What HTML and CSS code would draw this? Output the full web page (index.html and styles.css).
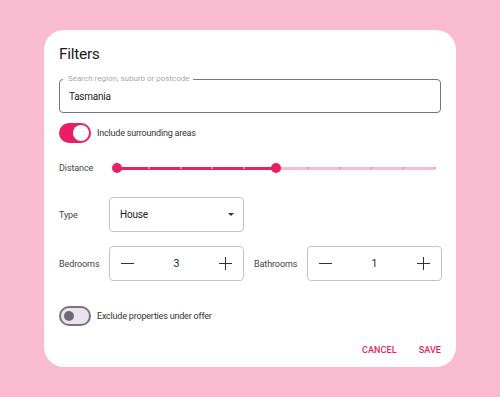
FILE: index.html
```html
<!DOCTYPE html>
<html>
<head>
<meta charset="utf-8">
<link rel="stylesheet" href="styles.css">
</head>
<body>
<div class="card">
  <div class="title">Filters</div>
  <div class="field">
    <span class="field-label">Search region, suburb or postcode</span>
    <span class="field-value">Tasmania</span>
  </div>
  <div class="switch-row row-include">
    <span class="switch on"><span class="knob"></span></span>
    <span class="switch-text">Include surrounding areas</span>
  </div>
  <div class="row row-distance">
    <span class="label">Distance</span>
    <div class="slider">
      <div class="track-inactive"></div>
      <div class="track-active"></div>
      <span class="tick t-on" style="left:10%"></span>
      <span class="tick t-on" style="left:20%"></span>
      <span class="tick t-on" style="left:30%"></span>
      <span class="tick t-on" style="left:40%"></span>
      <span class="tick" style="left:60%"></span>
      <span class="tick" style="left:70%"></span>
      <span class="tick" style="left:80%"></span>
      <span class="tick" style="left:90%"></span>
      <span class="tick" style="left:100%"></span>
      <span class="thumb" style="left:0%"></span>
      <span class="thumb" style="left:50%"></span>
    </div>
  </div>
  <div class="row row-type">
    <span class="label">Type</span>
    <div class="box select">
      <span>House</span>
      <span class="caret"></span>
    </div>
  </div>
  <div class="row row-rooms">
    <span class="label">Bedrooms</span>
    <div class="box stepper">
      <span class="minus"></span>
      <span class="num">3</span>
      <span class="plus"></span>
    </div>
    <span class="label label-bath">Bathrooms</span>
    <div class="box stepper">
      <span class="minus"></span>
      <span class="num">1</span>
      <span class="plus"></span>
    </div>
  </div>
  <div class="switch-row row-exclude">
    <span class="switch off"><span class="knob"></span></span>
    <span class="switch-text">Exclude properties under offer</span>
  </div>
  <div class="actions">
    <span class="btn">CANCEL</span>
    <span class="btn">SAVE</span>
  </div>
</div>
</body>
</html>
```

FILE: styles.css
```css
* { box-sizing: border-box; }
html, body { margin: 0; padding: 0; }
body {
  background: #f8bbd0;
  font-family: Roboto, "Liberation Sans", sans-serif;
  color: #1d1b20;
  width: 500px;
  height: 397px;
  padding: 30px 44px 0 44px;
}
.card {
  width: 412px;
  height: 337px;
  background: #fff;
  border-radius: 20px;
  padding: 12px 15px 0 15px;
  display: flex;
  flex-direction: column;
}
.title {
  font-size: 15.5px;
  letter-spacing: -0.3px;
  line-height: 24px;
  height: 24px;
  color: #1d1b20;
}
.field {
  position: relative;
  margin-top: 13px;
  height: 34px;
  border: 1px solid #79747e;
  border-radius: 4px;
  display: flex;
  align-items: center;
  padding-left: 9px;
}
.field-label {
  position: absolute;
  top: -7px;
  left: 3px;
  padding: 0 3px 0 5px;
  background: #fff;
  font-size: 8px;
  line-height: 12px;
  color: #a8a8a8;
}
.field-value {
  font-size: 10px;
  letter-spacing: -0.25px;
  color: #1d1b20;
}
.switch-row {
  display: flex;
  align-items: center;
  height: 20px;
}
.row-include { margin-top: 10px; }
.row-exclude { margin-top: 25px; }
.switch {
  width: 32px;
  height: 20px;
  border-radius: 10px;
  display: flex;
  align-items: center;
  flex: none;
}
.switch.on {
  background: #e91e63;
  justify-content: flex-end;
  padding-right: 2px;
}
.switch.on .knob {
  width: 16px;
  height: 16px;
  border-radius: 50%;
  background: #fff;
}
.switch.off {
  background: #ebe2ef;
  border: 2px solid #79747e;
  padding-left: 3px;
}
.switch.off .knob {
  width: 10px;
  height: 10px;
  border-radius: 50%;
  background: #6f6a72;
}
.switch-text {
  margin-left: 6px;
  font-size: 9px;
  letter-spacing: -0.2px;
  color: #333;
}
.row {
  display: flex;
  align-items: center;
}
.label {
  width: 50px;
  flex: none;
  font-size: 9px;
  letter-spacing: -0.1px;
  color: #444;
}
.row-distance {
  margin-top: 15px;
  height: 20px;
}
.slider {
  position: relative;
  flex: 1;
  height: 20px;
  margin: 0 6px 0 8px;
}
.track-inactive, .track-active {
  position: absolute;
  top: 50%;
  height: 3px;
  margin-top: -1.5px;
  border-radius: 2px;
}
.track-inactive {
  left: 0;
  right: 0;
  background: #f8bbd0;
}
.track-active {
  left: 0;
  width: 50%;
  background: #e91e63;
}
.tick {
  position: absolute;
  top: 50%;
  width: 2px;
  height: 2px;
  margin: -1px 0 0 -1px;
  border-radius: 50%;
  background: #e98aaa;
}
.tick.t-on { background: #f7a3c0; }
.thumb {
  position: absolute;
  top: 50%;
  width: 10px;
  height: 10px;
  margin: -5px 0 0 -5px;
  border-radius: 50%;
  background: #e91e63;
}
.row-type { margin-top: 19px; }
.row-rooms { margin-top: 14px; }
.box {
  width: 135px;
  height: 35px;
  border: 1px solid #c4c4c4;
  border-radius: 4px;
  display: flex;
  align-items: center;
  flex: none;
}
.select {
  padding: 0 9px 0 10px;
  justify-content: space-between;
  font-size: 10px;
  letter-spacing: -0.2px;
  color: #1d1b20;
}
.caret {
  width: 0;
  height: 0;
  border-left: 3.5px solid transparent;
  border-right: 3.5px solid transparent;
  border-top: 3.5px solid #333;
}
.label-bath {
  width: 53px;
  margin-left: 10px;
}
.stepper {
  justify-content: space-between;
  padding: 0 11px 0 11px;
}
.num {
  font-size: 10.5px;
  color: #1d1b20;
}
.minus, .plus {
  position: relative;
  width: 13px;
  height: 13px;
}
.minus::before, .plus::before, .plus::after {
  content: "";
  position: absolute;
  background: #333;
}
.minus::before, .plus::before {
  left: 0;
  right: 0;
  top: 50%;
  height: 1.6px;
  margin-top: -0.8px;
}
.plus::after {
  top: 0;
  bottom: 0;
  left: 50%;
  width: 1.6px;
  margin-left: -0.8px;
}
.actions {
  margin-top: 14px;
  height: 20px;
  display: flex;
  justify-content: flex-end;
  align-items: center;
  gap: 22px;
}
.btn {
  font-size: 9px;
  font-weight: 500;
  color: #e91e63;
  letter-spacing: 0.1px;
}
```
